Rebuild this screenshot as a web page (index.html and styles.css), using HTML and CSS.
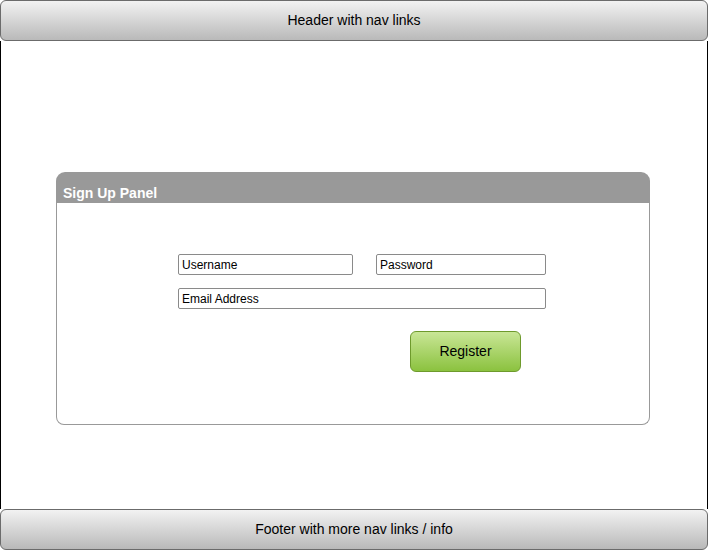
FILE: index.html
```html
<!DOCTYPE html>
<html>
<head>
<meta charset="utf-8">
<link rel="stylesheet" href="styles.css">
</head>
<body>
<div class="page">
  <header class="bar bar-top">Header with nav links</header>
  <main class="main">
    <section class="panel">
      <div class="panel-head">Sign Up Panel</div>
      <div class="panel-body">
        <div class="row">
          <input class="field user" type="text" value="Username">
          <input class="field pass" type="text" value="Password">
        </div>
        <div class="row">
          <input class="field long" type="text" value="Email Address">
        </div>
        <div class="actions">
          <button class="btn">Register</button>
        </div>
      </div>
    </section>
  </main>
  <footer class="bar bar-bottom">Footer with more nav links / info</footer>
</div>
</body>
</html>
```
FILE: styles.css
```css
html, body {
  margin: 0;
  padding: 0;
  background: #fff;
}
.page {
  width: 709px;
  height: 550px;
  display: flex;
  flex-direction: column;
  font-family: "Liberation Sans", Arial, sans-serif;
  color: #000;
}
.bar {
  box-sizing: border-box;
  width: 708px;
  height: 41px;
  border: 1px solid #6b6b6b;
  border-radius: 6px;
  background: linear-gradient(#f2f2f2, #b9b9b9);
  display: flex;
  align-items: center;
  justify-content: center;
  font-size: 14px;
}
.bar-top {
  padding-bottom: 1px;
}
.bar-bottom {
  padding-bottom: 2px;
}
.main {
  box-sizing: border-box;
  width: 708px;
  height: 468px;
  border-left: 1px solid #000;
  border-right: 1px solid #000;
  padding: 131px 0 0 55px;
}
.panel {
  width: 594px;
}
.panel-head {
  box-sizing: border-box;
  height: 31px;
  background: #999;
  border-radius: 9px 9px 0 0;
  color: #fff;
  font-weight: bold;
  font-size: 14px;
  padding: 13px 0 0 7px;
  line-height: 16px;
}
.panel-body {
  box-sizing: border-box;
  height: 222px;
  border: 1px solid #999;
  border-top: none;
  border-radius: 0 0 8px 8px;
  padding: 51px 0 0 121px;
}
.row {
  display: flex;
  gap: 23px;
  margin-bottom: 13px;
}
.field {
  box-sizing: border-box;
  height: 21px;
  margin: 0;
  border: 1px solid #8a8a8a;
  border-radius: 2px;
  padding: 0 3px;
  font-family: "Liberation Sans", Arial, sans-serif;
  font-size: 12px;
  color: #000;
  background: #fff;
  outline: none;
}
.user {
  width: 175px;
}
.pass {
  width: 170px;
}
.long {
  width: 368px;
}
.actions {
  padding: 9px 0 0 232px;
}
.btn {
  box-sizing: border-box;
  width: 111px;
  height: 41px;
  border: 1px solid #6e9a2c;
  border-radius: 6px;
  background: linear-gradient(#c9e696, #8bc23f);
  font-family: "Liberation Sans", Arial, sans-serif;
  font-size: 14px;
  color: #000;
  padding: 0 0 2px;
}
```
